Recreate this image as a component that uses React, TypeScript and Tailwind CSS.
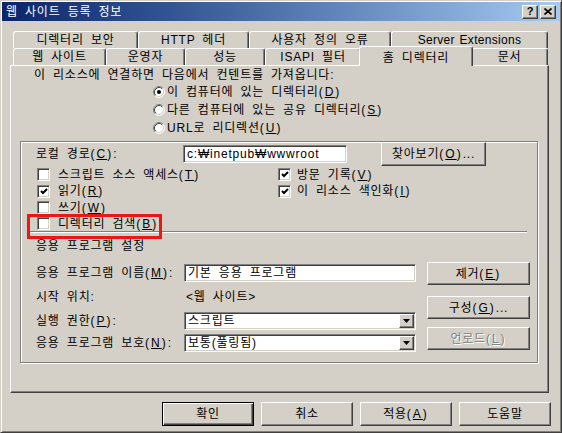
import React from 'react';

const raised =
  'border border-t-white border-l-white border-r-[#404040] border-b-[#404040] shadow-[inset_-1px_-1px_0_#808080]';
const sunken =
  'border border-t-[#808080] border-l-[#808080] border-r-white border-b-white shadow-[inset_1px_1px_0_#404040,inset_-1px_-1px_0_#d4d0c8]';

// mnemonic "(X)" — bitmap font parentheses are wider, so pad them a bit
function K({ k }: { k: string }) {
  return (
    <span className="tracking-[2px]">
      (<u>{k}</u>)
    </span>
  );
}

function Btn({
  children,
  className = '',
  disabled = false,
  isDefault = false,
}: {
  children: React.ReactNode;
  className?: string;
  disabled?: boolean;
  isDefault?: boolean;
}) {
  return (
    <div
      className={`flex items-center justify-center bg-[#d4d0c8] ${
        isDefault
          ? 'border border-black shadow-[inset_1px_1px_0_#fff,inset_-1px_-1px_0_#404040,inset_-2px_-2px_0_#808080]'
          : raised
      } ${disabled ? 'text-[#808080] [text-shadow:1px_1px_0_#fff]' : 'text-black'} ${className}`}
    >
      {children}
    </div>
  );
}

function Check({ checked = false }: { checked?: boolean }) {
  return (
    <span className={`w-[13px] h-[13px] bg-white ${sunken} shrink-0 flex items-center justify-center`}>
      {checked && (
        <svg width="8" height="7" viewBox="0 0 8 7">
          <path d="M1 3 L3 5 L7 1" stroke="#000" strokeWidth="2" fill="none" />
        </svg>
      )}
    </span>
  );
}

function Radio({ checked = false }: { checked?: boolean }) {
  return (
    <svg width="12" height="12" viewBox="0 0 12 12" className="shrink-0">
      <circle cx="6" cy="6" r="5" fill="#fff" />
      <path d="M2.11 9.89 A5.5 5.5 0 0 1 9.89 2.11" stroke="#808080" fill="none" />
      <path d="M9.89 2.11 A5.5 5.5 0 0 1 2.11 9.89" stroke="#fff" fill="none" />
      <path d="M2.82 9.18 A4.5 4.5 0 0 1 9.18 2.82" stroke="#404040" fill="none" />
      <path d="M9.18 2.82 A4.5 4.5 0 0 1 2.82 9.18" stroke="#d4d0c8" fill="none" />
      {checked && <circle cx="6" cy="6" r="2" fill="#000" />}
    </svg>
  );
}

function Combo({ value }: { value: string }) {
  return (
    <div className={`w-[232px] h-[18px] bg-white ${sunken} flex items-center`}>
      <span className="flex-1 pl-[3px] leading-[16px]">{value}</span>
      <span className={`w-[15px] h-[14px] mr-[1px] bg-[#d4d0c8] ${raised} flex items-center justify-center`}>
        <svg width="7" height="4" viewBox="0 0 7 4">
          <path d="M0 0 H7 L3.5 4 Z" fill="#000" />
        </svg>
      </span>
    </div>
  );
}

function Tab({ w, children }: { w: string; children: React.ReactNode }) {
  return (
    <div
      className={`${w} h-full flex items-center justify-center bg-[#d4d0c8] rounded-t-[3px] border-t border-l border-r border-t-white border-l-white border-r-[#404040] shadow-[inset_-1px_0_0_#808080]`}
    >
      {children}
    </div>
  );
}

export default function App() {
  return (
    <div className="w-[562px] h-[433px] bg-[#d4d0c8] border border-t-[#d4d0c8] border-l-[#d4d0c8] border-r-[#404040] border-b-[#404040] shadow-[inset_1px_1px_0_#fff,inset_-1px_-1px_0_#808080] p-[1px] flex flex-col font-['Liberation_Sans','Noto_Sans_CJK_KR',sans-serif] text-[12px] text-black tracking-[0.8px] [word-spacing:3px] select-none overflow-hidden">
      {/* Title bar */}
      <div className="h-[19px] bg-linear-to-r from-[#0a246a] to-[#a6caf0] flex items-center pl-[4px] pr-[4px]">
        <span className="flex-1 text-white">웹 사이트 등록 정보</span>
        <div className={`w-[16px] h-[14px] bg-[#d4d0c8] ${raised} flex items-center justify-center font-bold text-[11px] leading-none tracking-normal`}>?</div>
        <div className={`w-[16px] h-[14px] ml-[2px] bg-[#d4d0c8] ${raised} flex items-center justify-center`}>
          <svg width="8" height="7" viewBox="0 0 8 7">
            <path d="M0.5 0.5 L7.5 6.5 M7.5 0.5 L0.5 6.5" stroke="#000" strokeWidth="1.6" />
          </svg>
        </div>
      </div>

      <div className="pl-[8px] mt-[10px] flex flex-col">
        {/* Tab rows */}
        <div className="flex ml-[3px] h-[17px]">
          <Tab w="w-[125px]">디렉터리 보안</Tab>
          <Tab w="w-[111px]">HTTP 헤더</Tab>
          <Tab w="w-[142px]">사용자 정의 오류</Tab>
          <Tab w="w-[157px]">
            <span className="tracking-[0.3px] [word-spacing:1px]">Server Extensions</span>
          </Tab>
        </div>
        <div className="flex ml-[3px] h-[17px]">
          <Tab w="w-[93px]">웹 사이트</Tab>
          <Tab w="w-[79px]">운영자</Tab>
          <Tab w="w-[80px]">성능</Tab>
          <Tab w="w-[96px]">ISAPI 필터</Tab>
          <div className="relative z-10 -mt-[2px] -mx-[2px] w-[114px] h-[20px] shrink-0 flex items-start pt-[2px] justify-center bg-[#d4d0c8] rounded-t-[3px] border-t border-l border-r border-t-white border-l-white border-r-[#404040] shadow-[inset_-1px_0_0_#808080]">
            홈 디렉터리
          </div>
          <Tab w="w-[77px]">문서</Tab>
        </div>

        {/* Tab page */}
        <div className={`w-[539px] h-[328px] ${raised} flex flex-col`}>
          <div className="mt-[1px] h-[16px] leading-[16px] pl-[23px]">
            이 리소스에 연결하면 다음에서 컨텐트를 가져옵니다:
          </div>
          <div className="flex flex-col pl-[142px]">
            <div className="h-[18px] flex items-center gap-[2px]">
              <Radio checked />
              <span>
                이 컴퓨터에 있는 디렉터리<K k="D" />
              </span>
            </div>
            <div className="h-[18px] flex items-center gap-[2px]">
              <Radio />
              <span>
                다른 컴퓨터에 있는 공유 디렉터리<K k="S" />
              </span>
            </div>
            <div className="h-[18px] flex items-center gap-[2px]">
              <Radio />
              <span>
                URL로 리디렉션<K k="U" />
              </span>
            </div>
          </div>

          {/* Group box */}
          <div className="relative mt-[4px] ml-[9px] w-[518px] h-[222px] border border-[#808080] shadow-[inset_1px_1px_0_#fff,1px_1px_0_#fff] flex flex-col">
            <div className="h-[24px] flex items-center">
              <span className="w-[162px] pl-[15px]">
                로컬 경로<K k="C" />:
              </span>
              <div className={`w-[164px] h-[18px] bg-white ${sunken} pl-[3px] leading-[16px]`}>c:₩inetpub₩wwwroot</div>
              <Btn className="ml-[34px] w-[105px] h-[24px]">
                찾아보기<K k="O" />...
              </Btn>
            </div>

            <div className="h-[17px] flex items-center">
              <div className="w-[257px] pl-[16px] flex items-center gap-[8px]">
                <Check />
                <span>
                  스크립트 소스 액세스<K k="T" />
                </span>
              </div>
              <div className="flex items-center gap-[6px]">
                <Check checked />
                <span>
                  방문 기록<K k="V" />
                </span>
              </div>
            </div>
            <div className="h-[16px] flex items-center">
              <div className="w-[257px] pl-[16px] flex items-center gap-[8px]">
                <Check checked />
                <span>
                  읽기<K k="R" />
                </span>
              </div>
              <div className="flex items-center gap-[6px]">
                <Check checked />
                <span>
                  이 리소스 색인화<K k="I" />
                </span>
              </div>
            </div>
            <div className="h-[17px] flex items-center">
              <div className="w-[257px] pl-[16px] flex items-center gap-[8px]">
                <Check />
                <span>
                  쓰기<K k="W" />
                </span>
              </div>
            </div>
            <div className="h-[15px] flex items-center">
              <div className="w-[257px] pl-[16px] flex items-center gap-[8px]">
                <Check />
                <span>
                  디렉터리 검색<K k="B" />
                </span>
              </div>
            </div>

            <div className="ml-[6px] w-[500px] h-0 border-t border-t-[#808080] border-b border-b-white" />

            <div className="mt-[5px] h-[16px] leading-[16px] pl-[15px]">응용 프로그램 설정</div>

            <div className="mt-[7px] flex">
              <div className="flex flex-col">
                <div className="h-[24px] flex items-center">
                  <span className="w-[163px] pl-[15px]">
                    응용 프로그램 이름<K k="M" />:
                  </span>
                  <div className={`w-[232px] h-[18px] bg-white ${sunken} pl-[3px] leading-[16px]`}>기본 응용 프로그램</div>
                </div>
                <div className="h-[24px] flex items-center">
                  <span className="w-[163px] pl-[15px]">시작 위치:</span>
                  <span className="pl-[2px]">&lt;웹 사이트&gt;</span>
                </div>
                <div className="mt-[2px] h-[20px] flex items-center">
                  <span className="w-[163px] pl-[15px]">
                    실행 권한<K k="P" />:
                  </span>
                  <Combo value="스크립트" />
                </div>
                <div className="mt-[2px] h-[20px] flex items-center">
                  <span className="w-[163px] pl-[15px]">
                    응용 프로그램 보호<K k="N" />:
                  </span>
                  <Combo value="보통(풀링됨)" />
                </div>
              </div>
              <div className="ml-[11px] flex flex-col">
                <Btn className="mt-[1px] w-[103px] h-[23px]">
                  제거<K k="E" />
                </Btn>
                <Btn className="mt-[11px] w-[103px] h-[23px]">
                  구성<K k="G" />...
                </Btn>
                <Btn disabled className="mt-[8px] w-[103px] h-[23px]">
                  언로드<K k="L" />
                </Btn>
              </div>
            </div>

            {/* red highlight annotation */}
            <div className="absolute left-[6px] top-[72px] w-[135px] h-[25px] border-[3px] border-[#ee1515]" />
          </div>
        </div>

        {/* Bottom buttons */}
        <div className="mt-[9px] h-[24px] flex pl-[152px] gap-[7px]">
          <Btn isDefault className="w-[92px] h-[24px]">
            확인
          </Btn>
          <Btn className="w-[92px] h-[24px]">취소</Btn>
          <Btn className="w-[92px] h-[24px]">
            적용<K k="A" />
          </Btn>
          <Btn className="w-[92px] h-[24px]">도움말</Btn>
        </div>
      </div>
    </div>
  );
}
